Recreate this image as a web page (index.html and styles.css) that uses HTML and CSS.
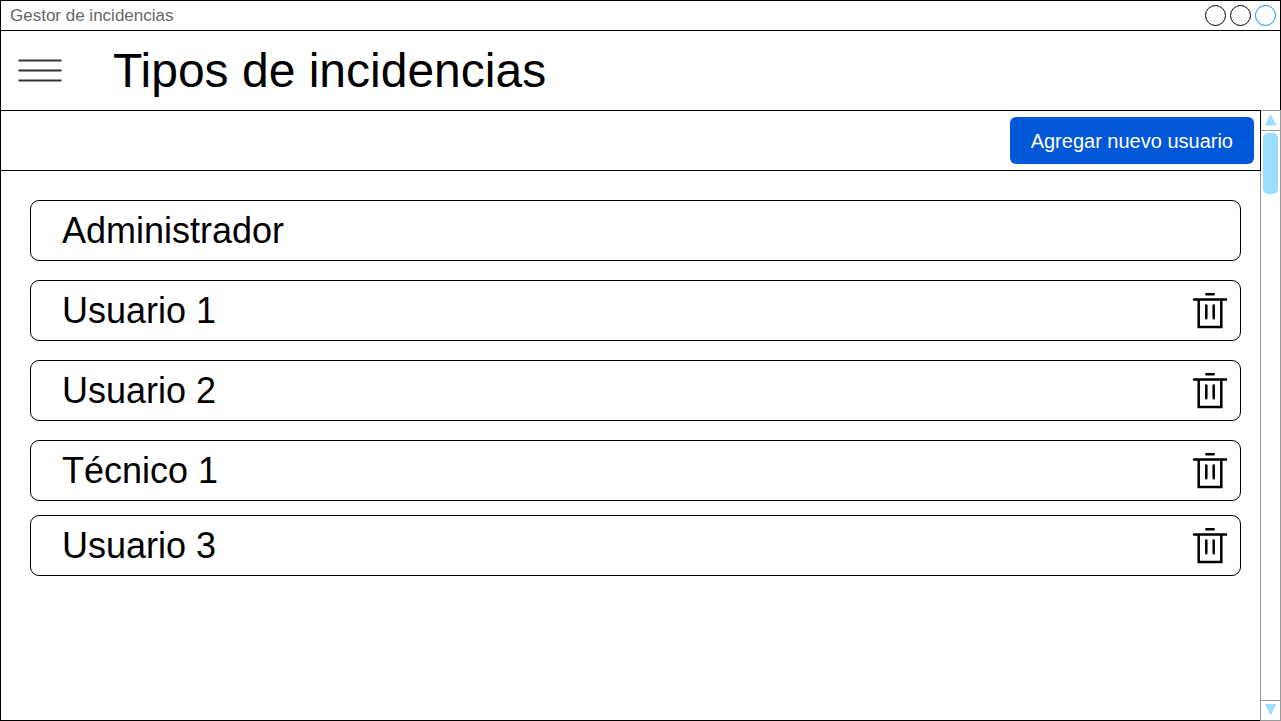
FILE: index.html
```html
<!DOCTYPE html>
<html lang="es">
<head>
<meta charset="utf-8">
<title>Gestor de incidencias</title>
<link rel="stylesheet" href="styles.css">
</head>
<body>
<svg class="sprite" aria-hidden="true">
  <symbol id="trash" viewBox="0 0 36 36">
    <g fill="none" stroke="#000" stroke-width="2.5" stroke-linecap="round">
      <path d="M14.3 1.3h7.4M2 6.4h32"/>
      <path d="M6.7 7v27.1h22.6V7" stroke-linecap="butt"/>
      <path d="M14.3 12.4v12.8M21.7 12.4v12.8"/>
    </g>
  </symbol>
</svg>
<div class="window">
  <div class="titlebar">
    <span class="titlebar-name">Gestor de incidencias</span>
    <div class="titlebar-controls">
      <button class="dot" type="button" aria-label="Minimizar"></button>
      <button class="dot" type="button" aria-label="Maximizar"></button>
      <button class="dot dot-active" type="button" aria-label="Cerrar"></button>
    </div>
  </div>
  <header class="header">
    <button class="menu" type="button" aria-label="Menú">
      <svg width="44" height="24" viewBox="0 0 44 24" fill="none" stroke="#333" stroke-width="1.8"><path d="M.5 1.5h43M.5 11.5h43M.5 21.5h43"/></svg>
    </button>
    <h1 class="title">Tipos de incidencias</h1>
  </header>
  <div class="body">
    <main class="main">
      <div class="toolbar">
        <button class="add" type="button">Agregar nuevo usuario</button>
      </div>
      <ul class="users">
        <li class="user"><span>Administrador</span></li>
        <li class="user"><span>Usuario 1</span><button class="remove" type="button" aria-label="Eliminar Usuario 1"><svg class="icon"><use href="#trash"/></svg></button></li>
        <li class="user"><span>Usuario 2</span><button class="remove" type="button" aria-label="Eliminar Usuario 2"><svg class="icon"><use href="#trash"/></svg></button></li>
        <li class="user"><span>Técnico 1</span><button class="remove" type="button" aria-label="Eliminar Técnico 1"><svg class="icon"><use href="#trash"/></svg></button></li>
        <li class="user user-close"><span>Usuario 3</span><button class="remove" type="button" aria-label="Eliminar Usuario 3"><svg class="icon"><use href="#trash"/></svg></button></li>
      </ul>
    </main>
    <div class="scrollbar">
      <button class="arrow arrow-up" type="button" aria-label="Subir"><svg width="12" height="12" viewBox="0 0 12 12"><path d="M5.5 0L11.5 11.5H0z" fill="#9df"/></svg></button>
      <div class="track"><div class="thumb"></div></div>
      <button class="arrow arrow-down" type="button" aria-label="Bajar"><svg width="12" height="12" viewBox="0 0 12 12"><path d="M5.5 11.5L11.5 0H0z" fill="#9df"/></svg></button>
    </div>
  </div>
</div>
</body>
</html>
```
FILE: styles.css
```css
* {
  box-sizing: border-box;
}

body {
  margin: 0;
  background: #fff;
  color: #000;
  font-family: "Liberation Sans", Arial, sans-serif;
}

button {
  padding: 0;
  border: 0;
  background: none;
  font: inherit;
}

.sprite {
  position: absolute;
  width: 0;
  height: 0;
}

.window {
  display: flex;
  flex-direction: column;
  min-height: 100vh;
}

.titlebar {
  display: flex;
  align-items: center;
  justify-content: space-between;
  height: 31px;
  padding: 0 4px 0 9px;
  border: 1px solid #000;
}

.titlebar-name {
  color: #666;
  font-size: 17px;
  line-height: 21px;
}

.titlebar-controls {
  display: flex;
  gap: 4px;
}

.dot {
  width: 21px;
  height: 21px;
  border: 1px solid #000;
  border-radius: 50%;
}

.dot-active {
  border-color: #008cff;
}

.header {
  display: flex;
  align-items: center;
  gap: 51px;
  height: 79px;
  padding: 0 17px;
  border: solid #000;
  border-width: 0 1px;
}

.menu,
.menu svg,
.arrow svg,
.icon {
  display: block;
}

.title {
  margin: 0;
  font-size: 48px;
  font-weight: 400;
  line-height: 56px;
}

.body {
  display: flex;
  flex: 1;
}

.main {
  flex: 1;
  border: solid #000;
  border-width: 1px 0 1px 1px;
}

.toolbar {
  display: flex;
  align-items: center;
  justify-content: flex-end;
  height: 60px;
  padding: 0 6px;
  border-bottom: 1px solid #000;
}

.add {
  height: 47px;
  padding: 2px 21px 0;
  border-radius: 6px;
  background: #0057d8;
  color: #fff;
  font-size: 20px;
}

.users {
  margin: 0;
  padding: 29px 19px 29px 29px;
  list-style: none;
}

.user {
  display: flex;
  align-items: center;
  justify-content: space-between;
  height: 61px;
  padding: 0 12px 0 31px;
  border: 1px solid #000;
  border-radius: 9px;
  font-size: 36px;
  line-height: 42px;
}

.user + .user {
  margin-top: 19px;
}

.user + .user-close {
  margin-top: 14px;
}

.icon {
  width: 36px;
  height: 36px;
}

.scrollbar {
  display: flex;
  flex-direction: column;
  width: 21px;
  border: 1px solid #999;
  background: #fff;
}

.scrollbar::before {
  content: "";
  height: 61px;
  margin: -1px 0 -60px -1px;
  border-left: 1px solid #000;
}

.arrow {
  display: flex;
  align-items: center;
  justify-content: center;
  height: 20px;
  padding-bottom: 1px;
}

.arrow-up {
  border-bottom: 1px solid #999;
}

.arrow-down {
  border-top: 1px solid #999;
}

.track {
  flex: 1;
  padding: 2px;
}

.thumb {
  height: 61px;
  border-radius: 5px;
  background: #9df;
}
```
